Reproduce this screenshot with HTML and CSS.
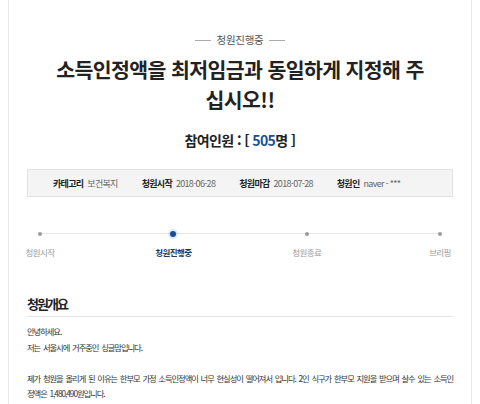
FILE: index.html
```html
<!DOCTYPE html>
<html lang="ko">
<head>
<meta charset="utf-8">
<link rel="stylesheet" href="styles.css">
</head>
<body>
<div class="card">
  <div class="status"><span class="status-line"></span><span class="status-text">청원진행중</span><span class="status-line"></span></div>
  <h1 class="title">소득인정액을 최저임금과 동일하게 지정해 주<br>십시오!!</h1>
  <p class="count">참여인원 : [ <span class="num">505</span>명 ]</p>
  <div class="info">
    <div class="info-item"><span class="info-label">카테고리</span><span class="info-value">보건복지</span></div>
    <div class="info-item"><span class="info-label">청원시작</span><span class="info-value">2018-06-28</span></div>
    <div class="info-item"><span class="info-label">청원마감</span><span class="info-value">2018-07-28</span></div>
    <div class="info-item"><span class="info-label">청원인</span><span class="info-value">naver - ***</span></div>
  </div>
  <div class="steps">
    <div class="step"><span class="dot"></span><span class="step-label">청원시작</span></div>
    <div class="step active"><span class="dot"></span><span class="step-label">청원진행중</span></div>
    <div class="step"><span class="dot"></span><span class="step-label">청원종료</span></div>
    <div class="step"><span class="dot"></span><span class="step-label">브리핑</span></div>
  </div>
  <h2 class="section-title">청원개요</h2>
  <div class="content">
    <p>안녕하세요.<br>저는 서울시에 거주중인 싱글맘입니다.</p>
    <p>제가 청원을 올리게 된 이유는 한부모 가정 소득인정액이 너무 현실성이 떨어져서 입니다. 2인 식구가 한부모 지원을 받으며 살수 있는 소득인<br>정액은 1,480,490원입니다.</p>
  </div>
</div>
</body>
</html>
```
FILE: styles.css
```css
* { box-sizing: border-box; }
html, body { margin: 0; padding: 0; background: #fff; }
body { font-family: "Noto Sans CJK KR", "Noto Sans", sans-serif; color: #333; }
.card {
  margin: 0 8px;
  height: 404px;
  border-left: 1px solid #ebebeb;
  border-right: 1px solid #ebebeb;
  padding: 32px 18px 0;
  overflow: hidden;
}
.status {
  display: flex;
  justify-content: center;
  align-items: center;
  gap: 6px;
  height: 16px;
}
.status-line { width: 16px; height: 1px; background: #aaa; }
.status-text { font-size: 10.5px; line-height: 16px; color: #555; letter-spacing: -0.3px; }
.title {
  margin: 6px 0 0;
  text-align: center;
  font-size: 20.5px;
  line-height: 30px;
  font-weight: 700;
  color: #222;
  letter-spacing: -0.6px;
}
.count {
  margin: 16px 0 0;
  text-align: center;
  font-size: 14px;
  line-height: 20px;
  font-weight: 700;
  color: #222;
  letter-spacing: -0.6px;
}
.num { color: #1b4f92; }
.info {
  margin-top: 19px;
  height: 28px;
  background: #f4f4f4;
  border: 1px solid #e2e2e2;
  display: flex;
  align-items: center;
  padding-left: 25px;
  gap: 24px;
  font-size: 9px;
  letter-spacing: -0.7px;
}
.info-item { display: flex; align-items: center; gap: 4px; }
.info-label { font-weight: 700; color: #222; }
.info-value { color: #666; }
.steps {
  margin-top: 34px;
  display: flex;
  justify-content: space-between;
  background: linear-gradient(#e6e6e6, #e6e6e6) no-repeat;
  background-size: calc(100% - 26px) 1px;
  background-position: 13px 2px;
}
.step {
  width: 26px;
  display: flex;
  flex-direction: column;
  align-items: center;
}
.dot {
  width: 4px; height: 4px; margin-top: 1px;
  border-radius: 50%;
  background: #9a9a9a;
}
.step.active .dot {
  width: 6px; height: 6px; margin-top: 0;
  background: #1b4f92;
  box-shadow: 0 0 0 2px rgba(80, 140, 220, 0.18);
}
.step-label {
  margin-top: 10px;
  white-space: nowrap;
  font-size: 8.5px;
  line-height: 12px;
  color: #9a9a9a;
  letter-spacing: -0.6px;
}
.step.active .step-label { color: #1d3b68; font-weight: 700; margin-top: 9px; }
.section-title {
  margin: 37px 0 0;
  padding-bottom: 3px;
  border-bottom: 1px solid #e6e6e6;
  font-size: 13px;
  line-height: 18px;
  font-weight: 700;
  color: #222;
  letter-spacing: -2px;
}
.content {
  margin-top: 7px;
  font-size: 8.3px;
  line-height: 15.5px;
  color: #333;
  letter-spacing: -1.05px;
  word-spacing: 1.5px;
}
.content p { margin: 0 0 15.5px; white-space: nowrap; }
```
